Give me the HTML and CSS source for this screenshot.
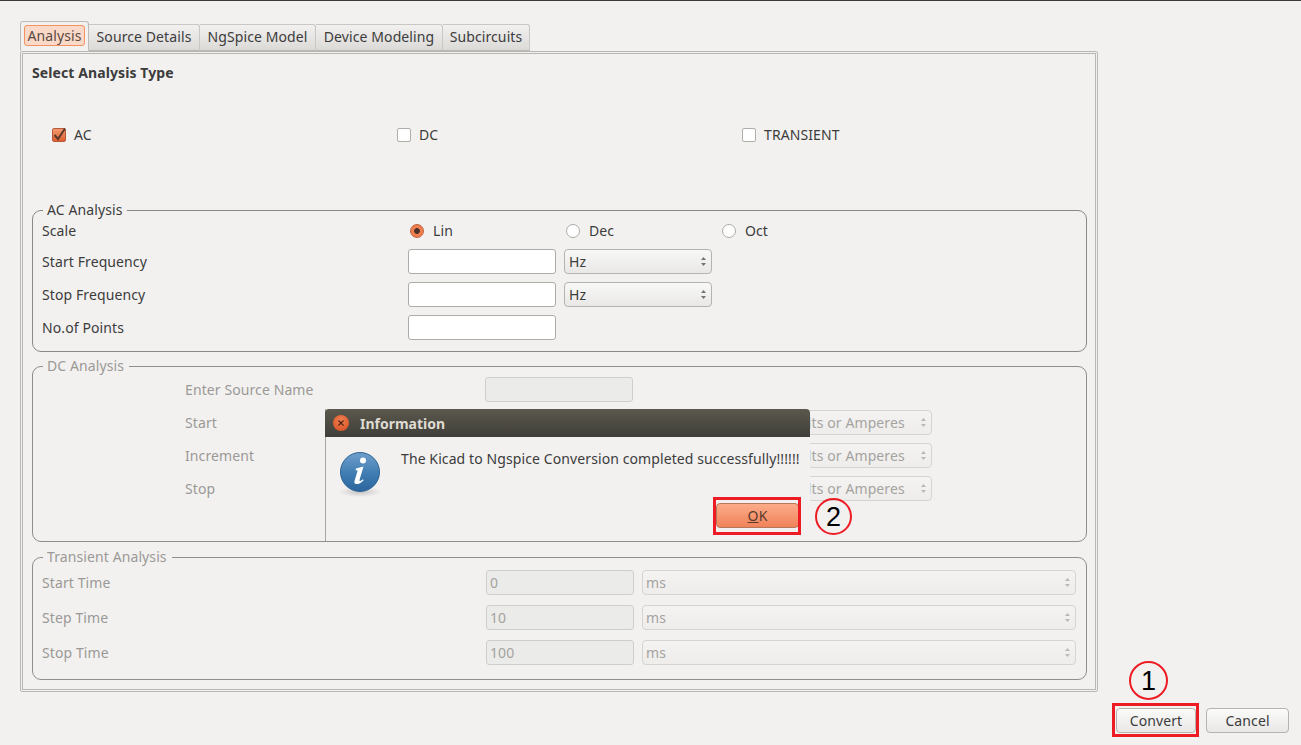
FILE: index.html
```html
<!DOCTYPE html>
<html lang="en">
<head>
<meta charset="utf-8">
<title>KiCad to Ngspice</title>
<link rel="stylesheet" href="styles.css">
</head>
<body>
<div class="window">
  <div class="tabs">
    <div class="tab active"><span class="tab-focus">Analysis</span></div>
    <div class="tab t2">Source Details</div>
    <div class="tab t3">NgSpice Model</div>
    <div class="tab t4">Device Modeling</div>
    <div class="tab t5">Subcircuits</div>
  </div>
  <div class="panel">
    <div class="heading">Select Analysis Type</div>
    <div class="types">
      <label class="opt"><span class="check on"><svg viewBox="0 0 14 14" width="14" height="14"><path d="M2.5 7 L6 11 L13 0.5" fill="none" stroke="#5b3a2c" stroke-width="2"/></svg></span>AC</label>
      <label class="opt"><span class="check"></span>DC</label>
      <label class="opt"><span class="check"></span>TRANSIENT</label>
    </div>

    <fieldset class="group ac">
      <legend>AC Analysis</legend>
      <div class="row scale">
        <span class="lbl">Scale</span>
        <div class="radios">
          <label class="opt"><span class="radio on"></span>Lin</label>
          <label class="opt"><span class="radio"></span>Dec</label>
          <label class="opt"><span class="radio"></span>Oct</label>
        </div>
      </div>
      <div class="row"><span class="lbl">Start Frequency</span><span class="field"></span><span class="select s148">Hz<svg class="spin" viewBox="0 0 7 11" width="7" height="11"><path d="M3.5 1 L6 4 H1Z M1 7 H6 L3.5 10Z" fill="#757573"/></svg></span></div>
      <div class="row"><span class="lbl">Stop Frequency</span><span class="field"></span><span class="select s148">Hz<svg class="spin" viewBox="0 0 7 11" width="7" height="11"><path d="M3.5 1 L6 4 H1Z M1 7 H6 L3.5 10Z" fill="#757573"/></svg></span></div>
      <div class="row"><span class="lbl">No.of Points</span><span class="field"></span></div>
    </fieldset>

    <fieldset class="group dc off">
      <legend>DC Analysis</legend>
      <div class="row"><span class="lbl">Enter Source Name</span><span class="field"></span></div>
      <div class="row"><span class="lbl">Start</span><span class="field"></span><span class="select volts">Volts or Amperes<svg class="spin" viewBox="0 0 7 11" width="7" height="11"><path d="M3.5 1 L6 4 H1Z M1 7 H6 L3.5 10Z" fill="#bbb9b6"/></svg></span></div>
      <div class="row"><span class="lbl">Increment</span><span class="field"></span><span class="select volts">Volts or Amperes<svg class="spin" viewBox="0 0 7 11" width="7" height="11"><path d="M3.5 1 L6 4 H1Z M1 7 H6 L3.5 10Z" fill="#bbb9b6"/></svg></span></div>
      <div class="row"><span class="lbl">Stop</span><span class="field"></span><span class="select volts">Volts or Amperes<svg class="spin" viewBox="0 0 7 11" width="7" height="11"><path d="M3.5 1 L6 4 H1Z M1 7 H6 L3.5 10Z" fill="#bbb9b6"/></svg></span></div>
    </fieldset>

    <fieldset class="group tr off">
      <legend>Transient Analysis</legend>
      <div class="row"><span class="lbl">Start Time</span><span class="field">0</span><span class="select wide">ms<svg class="spin" viewBox="0 0 7 11" width="7" height="11"><path d="M3.5 1 L6 4 H1Z M1 7 H6 L3.5 10Z" fill="#bbb9b6"/></svg></span></div>
      <div class="row"><span class="lbl">Step Time</span><span class="field">10</span><span class="select wide">ms<svg class="spin" viewBox="0 0 7 11" width="7" height="11"><path d="M3.5 1 L6 4 H1Z M1 7 H6 L3.5 10Z" fill="#bbb9b6"/></svg></span></div>
      <div class="row"><span class="lbl">Stop Time</span><span class="field">100</span><span class="select wide">ms<svg class="spin" viewBox="0 0 7 11" width="7" height="11"><path d="M3.5 1 L6 4 H1Z M1 7 H6 L3.5 10Z" fill="#bbb9b6"/></svg></span></div>
    </fieldset>
  </div>
  <div class="actions">
    <button class="btn convert">Convert</button>
    <button class="btn cancel">Cancel</button>
  </div>
</div>

<div class="dialog">
  <div class="titlebar">
    <span class="close"><svg viewBox="0 0 8 8" width="8" height="8"><path d="M1.5 1.5 L6.5 6.5 M6.5 1.5 L1.5 6.5" stroke="#4a2013" stroke-width="1.1"/></svg></span>
    <span class="title">Information</span>
  </div>
  <div class="dialog-body">
    <svg class="info" viewBox="0 0 48 50" width="48" height="50">
      <defs>
        <linearGradient id="ball" x1="0" y1="0" x2="0" y2="1"><stop offset="0" stop-color="#6f9fcb"/><stop offset=".55" stop-color="#3f7cb2"/><stop offset="1" stop-color="#2d659b"/></linearGradient>
        <radialGradient id="shade"><stop offset="0" stop-color="#000" stop-opacity=".18"/><stop offset="1" stop-color="#000" stop-opacity="0"/></radialGradient>
      </defs>
      <ellipse cx="24" cy="43" rx="22" ry="5" fill="url(#shade)"/>
      <circle cx="24" cy="23" r="19.5" fill="url(#ball)" stroke="#2f6598" stroke-width="1"/>
      <circle cx="27" cy="11.5" r="3" fill="#fff"/>
      <path d="M20 19.5 L27.5 17.5 L23.5 31 C23.2 32.5 24.5 32.3 27 30.2 L27.6 31.2 C24.5 34.5 22 35.5 19.8 35 C18.2 34.6 18.2 33 18.7 31.2 L21.7 21.5 L19.6 21.2Z" fill="#fff"/>
    </svg>
    <p class="msg">The Kicad to Ngspice Conversion completed successfully!!!!!!</p>
    <button class="btn ok"><span class="ul">O</span>K</button>
  </div>
</div>

<div class="mark box-ok"></div>
<div class="mark box-convert"></div>
<div class="mark num n2">2</div>
<div class="mark num n1">1</div>
</body>
</html>
```
FILE: styles.css
```css
* { box-sizing: border-box; }
html, body { margin: 0; height: 100%; }
body {
  width: 1301px;
  height: 745px;
  overflow: hidden;
  position: relative;
  background: #f2f1f0;
  color: #3c3c3c;
  font: 14px/18px "Noto Sans", sans-serif;
  letter-spacing: .1px;
  border-top: 1px solid #3c3b37;
}
.window { padding: 21px 12px 0 20px; }

.tabs { display: flex; align-items: flex-end; height: 29px; padding-left: 0; position: relative; z-index: 1; }
.tab {
  height: 27px;
  padding-top: 3px;
  text-align: center;
  border: 1px solid #c9c7c4;
  border-bottom: 1px solid #b9b7b3;
  border-left: 0;
  border-radius: 0 3px 0 0;
  background: linear-gradient(#f2f1f0, #dcdad7);
  white-space: nowrap;
}
.t2 { width: 111px; }
.t3 { width: 116px; }
.t4 { width: 127px; }
.t5 { width: 87px; }
.tab.active {
  width: 69px;
  height: 30px;
  padding: 3px 3px 0;
  background: #f2f1f0;
  border: 1px solid #bdbbb7;
  border-bottom-color: #f2f1f0;
  border-radius: 3px 3px 0 0;
}
.tab-focus {
  display: block;
  height: 21px;
  padding-top: 1px;
  line-height: 18px;
  color: #5a4a42;
  background: #fbd9c8;
  border: 1px solid #f4935f;
  border-radius: 3px;
}

.panel {
  width: 1078px;
  height: 641px;
  padding: 10px 8px 0 9px;
  border: 3px double #b9b7b3;
  border-radius: 2px;
}
.heading { font-weight: 700; height: 20px; }
.types { display: grid; grid-template-columns: repeat(3, 345px); padding: 41px 0 0 20px; height: 117px; }
.opt { display: flex; align-items: center; gap: 8px; height: 20px; }
.check {
  width: 14px;
  height: 14px;
  background: #fff;
  border: 1px solid #b0aeaa;
  border-radius: 2px;
  display: block;
}
.check.on { background: linear-gradient(#f29a70, #dd5f30); border-color: #b9583a; }
.check svg { display: block; margin: -1px; overflow: visible; }

.group {
  margin: 0;
  width: 1055px;
  padding: 0 0 0 9px;
  border: 1px solid #8a8986;
  border-radius: 9px;
  min-width: 0;
}
.group legend { margin-left: 1px; padding: 0 5px 0 4px; height: 18px; line-height: 18px; }
.ac { height: 151px; }
.dc { height: 185px; margin-top: 5px; }
.tr { height: 132px; margin-top: 6px; }

.row { display: flex; align-items: center; height: 33px; }
.ac .scale { height: 24px; margin-bottom: 2px; }
.lbl { display: block; }
.ac .lbl { width: 366px; }
.dc .row { padding-left: 143px; }
.dc .row:first-of-type { margin-top: -2px; }
.dc .lbl { width: 300px; }
.tr .lbl { width: 444px; }
.tr .row { height: 35px; }
.tr .row:first-of-type { margin-top: -1px; }
.field {
  width: 148px;
  height: 25px;
  padding: 3px;
  background: #fff;
  border: 1px solid #aeaca8;
  border-radius: 3px;
  flex: none;
}
.select {
  position: relative;
  height: 25px;
  padding: 3px 4px;
  margin-left: 8px;
  background: linear-gradient(#f8f8f7, #e9e8e6);
  border: 1px solid #b5b3af;
  border-radius: 4px;
  flex: none;
}
.s148 { width: 148px; }
.wide { width: 434px; padding-left: 3px; }
.volts { width: 152px; margin-left: 147px; padding-left: 10px; }
.spin { position: absolute; right: 4px; top: 6px; }
.radios { display: grid; grid-template-columns: 156px 156px 156px; padding-left: 2px; }
.radios .opt { gap: 9px; }
.radio {
  width: 14px;
  height: 14px;
  background: #fff;
  border: 1px solid #aeaca8;
  border-radius: 50%;
  display: block;
}
.radio.on {
  background: radial-gradient(circle, #4a3028 0 2.5px, #ef7f50 3.2px);
  border-color: #c0603a;
}

.off { border-color: #8f8e8b; }
.off legend, .off .lbl { color: #9b9996; }
.off .field { background: #ebebe9; color: #a5a3a0; border-color: #d0cecb; }
.off .select { background: linear-gradient(#f4f3f2, #eeedeb); color: #a5a3a0; border-color: #d6d4d1; }

.actions { display: flex; justify-content: flex-end; gap: 10px; margin-top: 16px; }
.btn {
  font: inherit;
  letter-spacing: inherit;
  color: #3c3c3c;
  height: 25px;
  padding: 0;
  background: linear-gradient(#fbfbfa, #e8e7e5);
  border: 1px solid #b5b3af;
  border-radius: 4px;
}
.convert { width: 80px; }
.cancel { width: 83px; }

.dialog {
  position: absolute;
  left: 325px;
  top: 408px;
  width: 485px;
  height: 132px;
  background: #f2f1f0;
  border-left: 1px solid #a8a6a2;
}
.titlebar {
  display: flex;
  align-items: center;
  height: 28px;
  padding: 1px 0 0 8px;
  background: linear-gradient(#5b584d, #3f3e39);
  border-radius: 4px 4px 0 0;
  margin-left: -1px;
}
.close {
  display: flex;
  align-items: center;
  justify-content: center;
  width: 16px;
  height: 16px;
  margin-top: -1px;
  border-radius: 50%;
  background: radial-gradient(circle at 50% 35%, #f08050, #d44b20);
}
.title { margin-left: 11px; font-weight: 700; font-size: 14px; letter-spacing: 0; color: #dfdbd2; }
.dialog-body { position: relative; height: 104px; }
.info { position: absolute; left: 10px; top: 12px; }
.msg { margin: 0; position: absolute; left: 75px; top: 13px; white-space: nowrap; }
.ok {
  position: absolute;
  left: 390px;
  top: 66px;
  width: 83px;
  height: 25px;
  color: #5a3a2a;
  background: linear-gradient(#fcab8a, #f0825a);
  border-color: #b9775a;
}
.ul { text-decoration: underline; }

.mark { position: absolute; }
.box-ok { left: 713px; top: 496px; width: 88px; height: 38px; border: 3px solid #ed1c24; }
.box-convert { left: 1112px; top: 702px; width: 87px; height: 34px; border: 3px solid #ed1c24; }
.num {
  display: flex;
  align-items: center;
  justify-content: center;
  border: 2px solid #ed1c24;
  border-radius: 50%;
  color: #000;
  font-family: "Liberation Sans", sans-serif;
  font-size: 27px;
  letter-spacing: 0;
}
.n2 { left: 815px; top: 497px; width: 37px; height: 37px; }
.n1 { left: 1129px; top: 660px; width: 39px; height: 39px; }
```
